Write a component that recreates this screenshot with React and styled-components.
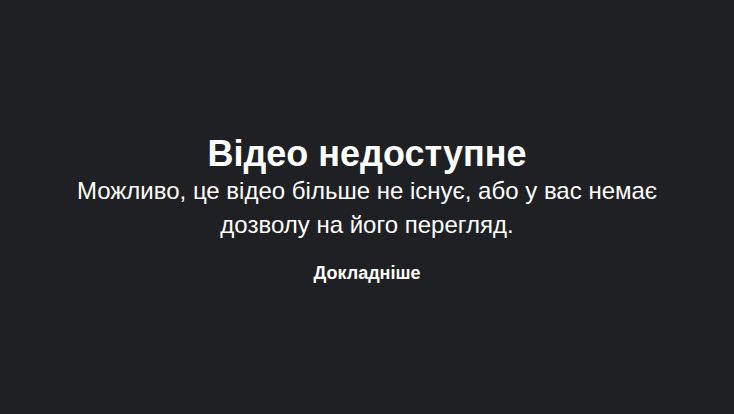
import React from "react";
import styled, { createGlobalStyle } from "styled-components";

const Global = createGlobalStyle`
  html, body { margin: 0; padding: 0; height: 100%; }
  body { background: #1f2023; font-family: "Liberation Sans", Arial, sans-serif; }
  #root { height: 100%; }
`;

const Screen = styled.div`
  box-sizing: border-box;
  height: 414px;
  width: 734px;
  padding-top: 4px;
  display: flex;
  flex-direction: column;
  align-items: center;
  justify-content: center;
  color: #fff;
  text-align: center;
  background: #1f2023;
`;

const Title = styled.div`
  font-size: 36px;
  font-weight: 700;
  line-height: 40px;
`;

const Subtitle = styled.div`
  font-size: 24px;
  line-height: 34px;
  max-width: 600px;
`;

const Link = styled.a`
  margin-top: 21px;
  font-size: 18px;
  font-weight: 700;
  color: #fff;
  text-decoration: none;
`;

export default function App() {
  return (
    <>
      <Global />
      <Screen>
        <Title>Відео недоступне</Title>
        <Subtitle>Можливо, це відео більше не існує, або у вас немає дозволу на його перегляд.</Subtitle>
        <Link href="#">Докладніше</Link>
      </Screen>
    </>
  );
}
